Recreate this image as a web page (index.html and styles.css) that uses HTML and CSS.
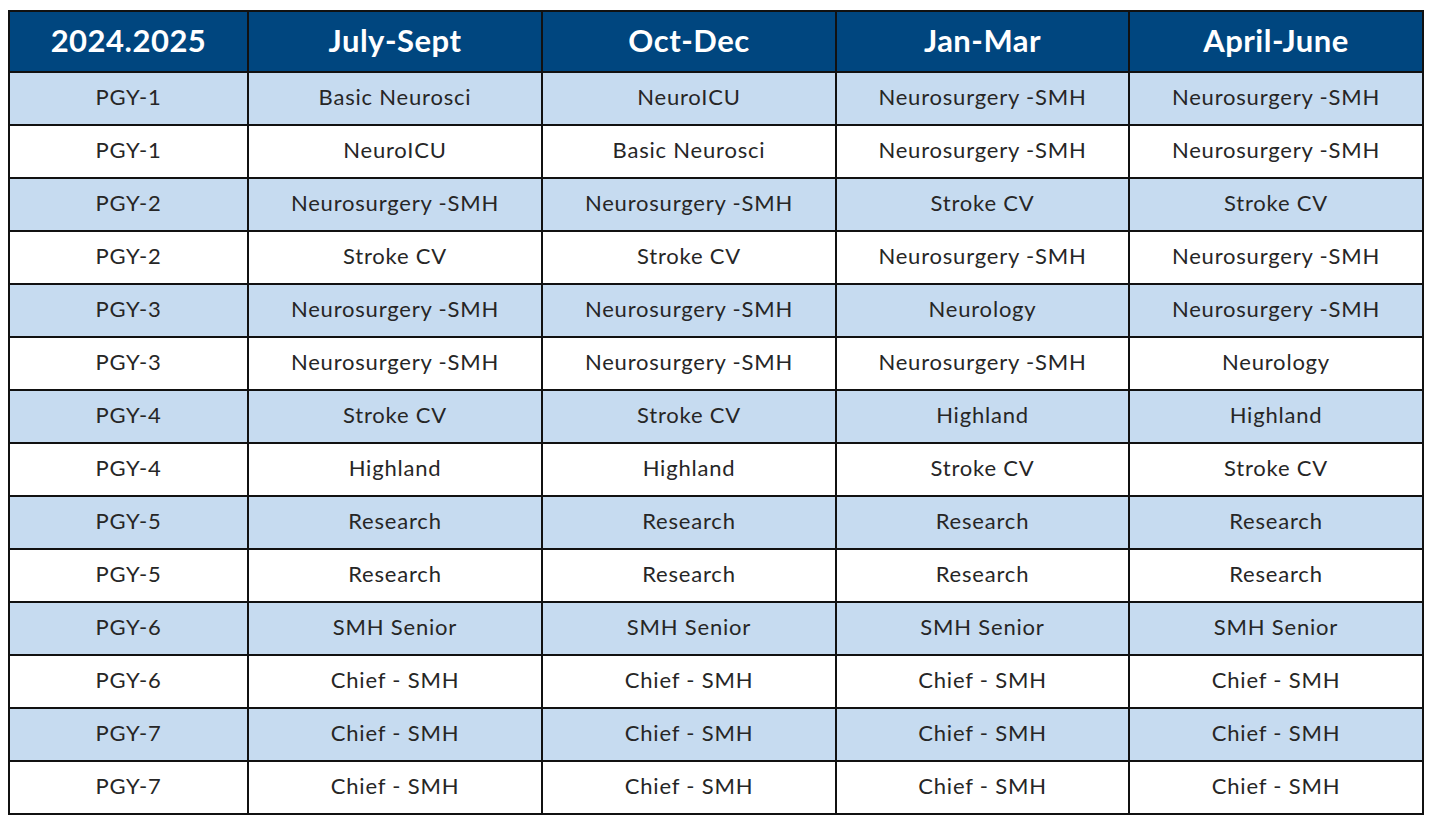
FILE: index.html
```html
<!DOCTYPE html>
<html>
<head>
<meta charset="utf-8">
<link rel="stylesheet" href="styles.css">
</head>
<body>
<table class="sched">
<colgroup>
<col class="c0"><col class="c1"><col class="c2"><col class="c3"><col class="c4">
</colgroup>
<thead>
<tr><th>2024.2025</th><th>July-Sept</th><th>Oct-Dec</th><th>Jan-Mar</th><th>April-June</th></tr>
</thead>
<tbody>
<tr class="alt"><td>PGY-1</td><td>Basic Neurosci</td><td>NeuroICU</td><td>Neurosurgery -SMH</td><td>Neurosurgery -SMH</td></tr>
<tr><td>PGY-1</td><td>NeuroICU</td><td>Basic Neurosci</td><td>Neurosurgery -SMH</td><td>Neurosurgery -SMH</td></tr>
<tr class="alt"><td>PGY-2</td><td>Neurosurgery -SMH</td><td>Neurosurgery -SMH</td><td>Stroke CV</td><td>Stroke CV</td></tr>
<tr><td>PGY-2</td><td>Stroke CV</td><td>Stroke CV</td><td>Neurosurgery -SMH</td><td>Neurosurgery -SMH</td></tr>
<tr class="alt"><td>PGY-3</td><td>Neurosurgery -SMH</td><td>Neurosurgery -SMH</td><td>Neurology</td><td>Neurosurgery -SMH</td></tr>
<tr><td>PGY-3</td><td>Neurosurgery -SMH</td><td>Neurosurgery -SMH</td><td>Neurosurgery -SMH</td><td>Neurology</td></tr>
<tr class="alt"><td>PGY-4</td><td>Stroke CV</td><td>Stroke CV</td><td>Highland</td><td>Highland</td></tr>
<tr><td>PGY-4</td><td>Highland</td><td>Highland</td><td>Stroke CV</td><td>Stroke CV</td></tr>
<tr class="alt"><td>PGY-5</td><td>Research</td><td>Research</td><td>Research</td><td>Research</td></tr>
<tr><td>PGY-5</td><td>Research</td><td>Research</td><td>Research</td><td>Research</td></tr>
<tr class="alt"><td>PGY-6</td><td>SMH Senior</td><td>SMH Senior</td><td>SMH Senior</td><td>SMH Senior</td></tr>
<tr><td>PGY-6</td><td>Chief - SMH</td><td>Chief - SMH</td><td>Chief - SMH</td><td>Chief - SMH</td></tr>
<tr class="alt"><td>PGY-7</td><td>Chief - SMH</td><td>Chief - SMH</td><td>Chief - SMH</td><td>Chief - SMH</td></tr>
<tr><td>PGY-7</td><td>Chief - SMH</td><td>Chief - SMH</td><td>Chief - SMH</td><td>Chief - SMH</td></tr>
</tbody>
</table>
</body>
</html>
```
FILE: styles.css
```css
html, body {
  margin: 0;
  padding: 0;
  background: #ffffff;
}
body {
  padding: 10px 0 0 8px;
  font-family: "Lato", "Liberation Sans", sans-serif;
}
.sched {
  border-collapse: collapse;
  table-layout: fixed;
  width: 1414px;
  border: 2px solid #111;
}
.c0 { width: 239px; }
.c1 { width: 294px; }
.c2 { width: 294px; }
.c3 { width: 293px; }
.c4 { width: 294px; }
.sched th,
.sched td {
  border: 2px solid #111;
  text-align: center;
  padding: 0;
  overflow: hidden;
  white-space: nowrap;
}
.sched th {
  background: #00467f;
  color: #ffffff;
  font-weight: 700;
  font-size: 31px;
  letter-spacing: 0.5px;
  height: 55px;
  padding-bottom: 4px;
}
.sched td {
  color: #262626;
  font-weight: 400;
  font-size: 22px;
  letter-spacing: 0.8px;
  height: 47px;
  padding-bottom: 4px;
}
.sched tr.alt td {
  background: #c6dbf0;
}
```
